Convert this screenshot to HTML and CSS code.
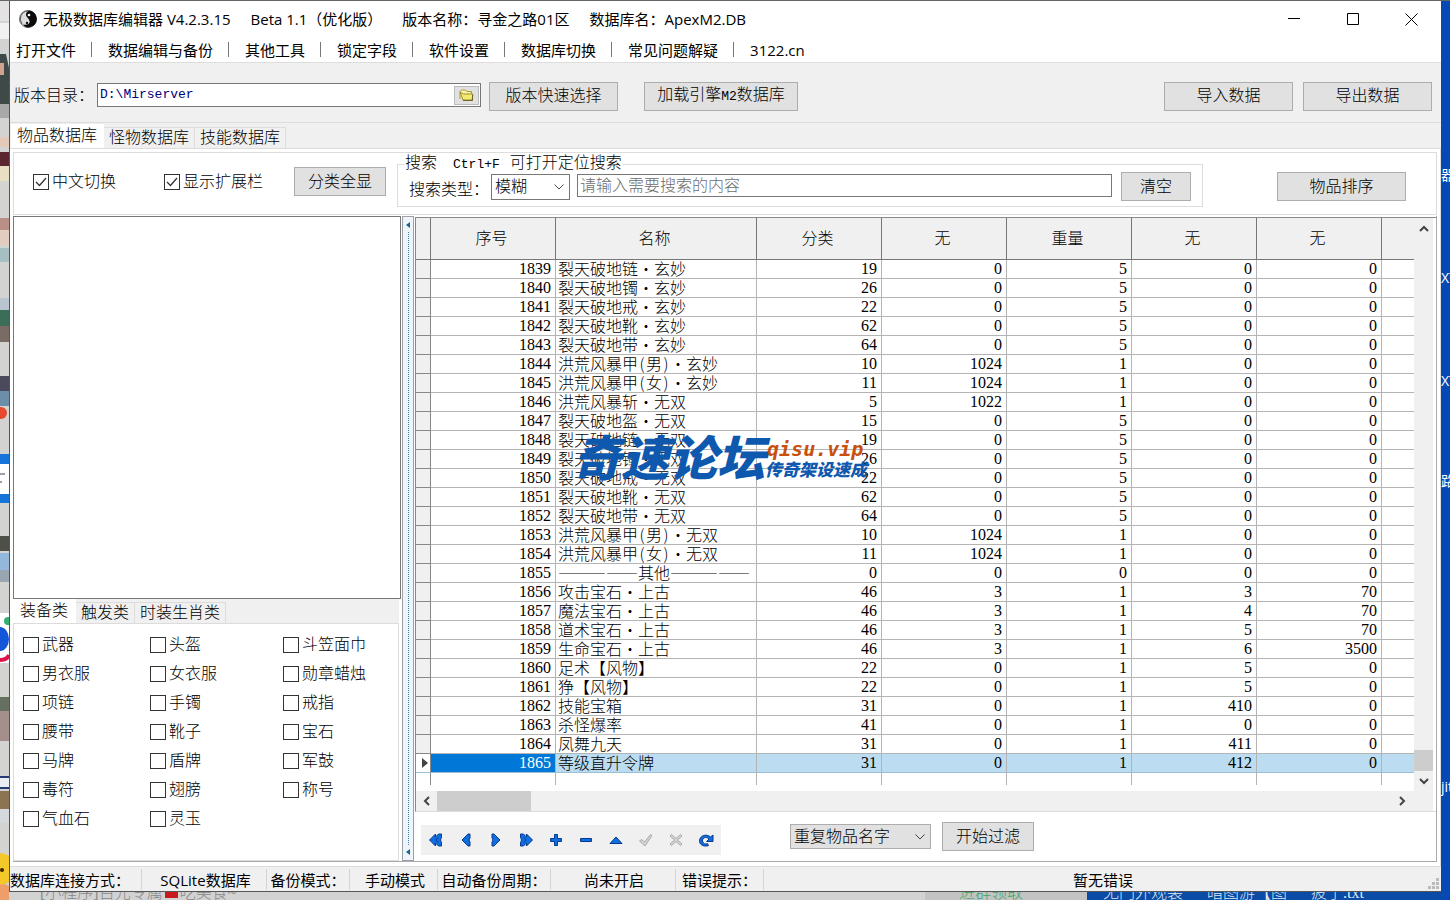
FILE: index.html
```html
<!DOCTYPE html>
<html lang="zh-CN">
<head>
<meta charset="utf-8">
<title>无极数据库编辑器</title>
<link rel="stylesheet" href="styles.css">
</head>
<body>
<div class="desk-top"></div>
<div class="desk-left">
<svg width="9" height="900" viewBox="0 0 9 900"><rect width="9" height="900" fill="#d3d3d1"/><rect width="9" height="20" fill="#e4e2e2"/><rect y="22" width="9" height="16" fill="#f1f1f1"/><path d="M0 53h6l3 14v36H0z" fill="#3d4a48"/><rect y="62" width="4" height="12" fill="#d1a28f"/><rect y="103" width="9" height="14" fill="#a8a8a8"/><rect y="136" width="9" height="10" fill="#e4c8b8"/><rect y="151" width="9" height="14" fill="#5b2630"/><rect y="165" width="9" height="15" fill="#e9dfc3"/><rect y="217" width="9" height="12" fill="#b98f86"/><rect y="229" width="9" height="15" fill="#e3cdbf"/><rect y="247" width="9" height="14" fill="#a5bfc2"/><rect y="297" width="9" height="12" fill="#b9c6d0"/><rect y="309" width="9" height="16" fill="#3c6d58"/><rect y="325" width="9" height="16" fill="#7a6c64"/><rect y="375" width="9" height="15" fill="#4b4a5c"/><rect y="390" width="9" height="15" fill="#6b8fa8"/><circle cx="1" cy="412" r="6" fill="#e64a2f"/><rect y="453" width="9" height="10" fill="#1774d8"/><rect y="463" width="9" height="30" fill="#fff"/><path d="M0 473h5M0 481h2" stroke="#345"/><rect y="493" width="9" height="9" fill="#1774d8"/><rect y="535" width="9" height="15" fill="#4d5049"/><rect y="552" width="9" height="17" fill="#92b8dc"/><rect y="569" width="9" height="12" fill="#98a6b2"/><rect y="612" width="9" height="50" fill="#fff"/><circle cx="8" cy="620" r="4" fill="#35b070"/><ellipse cx="0" cy="638" rx="9" ry="12" fill="#1456d8"/><path d="M0 659q7 0 9-5" stroke="#e0144c" stroke-width="4" fill="none"/><rect y="696" width="9" height="14" fill="#667060"/><rect y="710" width="9" height="30" fill="#a48f8c"/><rect y="775" width="9" height="13" fill="#e8edf6"/><path d="M0 776h9M0 787h9" stroke="#243a70" stroke-width="2"/><rect y="790" width="9" height="18" fill="#8c7452"/><rect y="808" width="9" height="13" fill="#d5d8dd"/><circle cx="0" cy="868" r="16" fill="#f2c928"/><circle cx="2" cy="869" r="2" fill="#3a2000"/><circle cx="3" cy="892" r="9" fill="#ef9d6b"/></svg>
</div>
<div class="app">
  <header class="titlebar">
    <svg class="logo" width="18" height="18" viewBox="0 0 18 18"><circle cx="9" cy="9" r="8.5" fill="#ddd" stroke="#777"/><path d="M10 .5a8.500 8.500 0 0 1 1 16.800Q6 18 4 14.500c5 1 8-1 6-5C7 6 5 4 10 .5z" fill="#0b0b0b"/><path d="M9 1A8 8 0 0 0 3 14" stroke="#555" stroke-width="1" fill="none"/><circle cx="10" cy="5" r="1.300" fill="#fff"/><circle cx="8" cy="13" r="1.200" fill="#111"/></svg>
    <h1 class="caption"><span>无极数据库编辑器 V4.2.3.15</span><span>Beta 1.1（优化版）</span><span>版本名称：寻金之路01区</span><span>数据库名：ApexM2.DB</span></h1>
    <div class="winbtns">
      <button aria-label="最小化"><svg width="12" height="12"><path d="M0 5.500h12" stroke="#000"/></svg></button>
      <button aria-label="最大化"><svg width="12" height="12"><path d="M.5.5h11v11H.5z" stroke="#000" fill="none"/></svg></button>
      <button aria-label="关闭"><svg width="13" height="13"><path d="M.5.5l12 12M12.500.5l-12 12" stroke="#000" fill="none"/></svg></button>
    </div>
  </header>
  <nav class="menu">
    <button>打开文件</button><i></i><button>数据编辑与备份</button><i></i><button>其他工具</button><i></i><button>锁定字段</button><i></i><button>软件设置</button><i></i><button>数据库切换</button><i></i><button>常见问题解疑</button><i></i><button>3122.cn</button>
  </nav>
  <div class="toolbar">
    <label for="dir">版本目录：</label>
    <div class="pathbox">
      <input id="dir" type="text" value="D:\Mirserver">
      <button class="browse" aria-label="浏览"><svg width="15" height="12" viewBox="0 0 15 12"><path d="M1 10V2.500L2.500 1h4L8 2.500h4.500V5" fill="#fbf3a4" stroke="#a89a3c"/><path d="M1 3l3.500 2H14l-1 6H4z" fill="#f4ea72" stroke="#9a8c34"/><path d="M4 11.500h9.500V6" stroke="#6d6424" fill="none"/></svg></button>
    </div>
    <button class="btn w129">版本快速选择</button>
    <button class="btn w154 load">加载引擎<span class="narrow">M2</span>数据库</button>
    <button class="btn w129 right">导入数据</button>
    <button class="btn w129">导出数据</button>
  </div>
  <div class="tabs main-tabs" role="tablist">
    <button class="tab active" role="tab">物品数据库</button><button class="tab" role="tab">怪物数据库</button><button class="tab" role="tab">技能数据库</button>
  </div>
  <main class="page">
    <section class="filter">
      <label class="check c1"><input type="checkbox" checked>中文切换</label>
      <label class="check c2"><input type="checkbox" checked>显示扩展栏</label>
      <button class="btn w92 showall">分类全显</button>
      <fieldset class="group">
        <legend>搜索<span class="mono">Ctrl+F</span>可打开定位搜索</legend>
        <label for="kind">搜索类型：</label>
        <select id="kind" class="combo kind"><option>模糊</option></select>
        <input class="query" type="text" placeholder="请输入需要搜索的内容" aria-label="搜索内容">
        <button class="btn w70 clear">清空</button>
      </fieldset>
      <button class="btn w129 sort">物品排序</button>
    </section>
    <div class="split">
      <aside class="side">
        <div class="list"></div>
        <div class="tabs side-tabs" role="tablist">
          <button class="tab active" role="tab">装备类</button><button class="tab" role="tab">触发类</button><button class="tab" role="tab">时装生肖类</button>
        </div>
        <div class="cats">
          <label class="check"><input type="checkbox">武器</label><label class="check"><input type="checkbox">头盔</label><label class="check"><input type="checkbox">斗笠面巾</label>
          <label class="check"><input type="checkbox">男衣服</label><label class="check"><input type="checkbox">女衣服</label><label class="check"><input type="checkbox">勋章蜡烛</label>
          <label class="check"><input type="checkbox">项链</label><label class="check"><input type="checkbox">手镯</label><label class="check"><input type="checkbox">戒指</label>
          <label class="check"><input type="checkbox">腰带</label><label class="check"><input type="checkbox">靴子</label><label class="check"><input type="checkbox">宝石</label>
          <label class="check"><input type="checkbox">马牌</label><label class="check"><input type="checkbox">盾牌</label><label class="check"><input type="checkbox">军鼓</label>
          <label class="check"><input type="checkbox">毒符</label><label class="check"><input type="checkbox">翅膀</label><label class="check"><input type="checkbox">称号</label>
          <label class="check"><input type="checkbox">气血石</label><label class="check"><input type="checkbox">灵玉</label>
        </div>
      </aside>
      <div class="splitter"><svg width="4" height="6"><path d="M4 0v6L0 3z" fill="#17658f"/></svg><span class="dots"></span><svg width="4" height="6"><path d="M4 0v6L0 3z" fill="#17658f"/></svg></div>
      <section class="data">
        <div class="gridbox">
          <div class="tablewrap">
            <table>
              <colgroup><col class="k0"><col class="k1"><col class="k2"><col class="k1"><col class="k1"><col class="k1"><col class="k1"><col class="k1"><col></colgroup>
              <thead><tr><th></th><th>序号</th><th>名称</th><th>分类</th><th>无</th><th>重量</th><th>无</th><th>无</th><th></th></tr></thead>
              <tbody>
                <tr><td></td><td>1839</td><td>裂天破地链<b>·</b>玄妙</td><td>19</td><td>0</td><td>5</td><td>0</td><td>0</td><td></td></tr>
                <tr><td></td><td>1840</td><td>裂天破地镯<b>·</b>玄妙</td><td>26</td><td>0</td><td>5</td><td>0</td><td>0</td><td></td></tr>
                <tr><td></td><td>1841</td><td>裂天破地戒<b>·</b>玄妙</td><td>22</td><td>0</td><td>5</td><td>0</td><td>0</td><td></td></tr>
                <tr><td></td><td>1842</td><td>裂天破地靴<b>·</b>玄妙</td><td>62</td><td>0</td><td>5</td><td>0</td><td>0</td><td></td></tr>
                <tr><td></td><td>1843</td><td>裂天破地带<b>·</b>玄妙</td><td>64</td><td>0</td><td>5</td><td>0</td><td>0</td><td></td></tr>
                <tr><td></td><td>1844</td><td>洪荒风暴甲<u>(</u>男<u>)</u><b>·</b>玄妙</td><td>10</td><td>1024</td><td>1</td><td>0</td><td>0</td><td></td></tr>
                <tr><td></td><td>1845</td><td>洪荒风暴甲<u>(</u>女<u>)</u><b>·</b>玄妙</td><td>11</td><td>1024</td><td>1</td><td>0</td><td>0</td><td></td></tr>
                <tr><td></td><td>1846</td><td>洪荒风暴斩<b>·</b>无双</td><td>5</td><td>1022</td><td>1</td><td>0</td><td>0</td><td></td></tr>
                <tr><td></td><td>1847</td><td>裂天破地盔<b>·</b>无双</td><td>15</td><td>0</td><td>5</td><td>0</td><td>0</td><td></td></tr>
                <tr><td></td><td>1848</td><td>裂天破地链<b>·</b>无双</td><td>19</td><td>0</td><td>5</td><td>0</td><td>0</td><td></td></tr>
                <tr><td></td><td>1849</td><td>裂天破地镯<b>·</b>无双</td><td>26</td><td>0</td><td>5</td><td>0</td><td>0</td><td></td></tr>
                <tr><td></td><td>1850</td><td>裂天破地戒<b>·</b>无双</td><td>22</td><td>0</td><td>5</td><td>0</td><td>0</td><td></td></tr>
                <tr><td></td><td>1851</td><td>裂天破地靴<b>·</b>无双</td><td>62</td><td>0</td><td>5</td><td>0</td><td>0</td><td></td></tr>
                <tr><td></td><td>1852</td><td>裂天破地带<b>·</b>无双</td><td>64</td><td>0</td><td>5</td><td>0</td><td>0</td><td></td></tr>
                <tr><td></td><td>1853</td><td>洪荒风暴甲<u>(</u>男<u>)</u><b>·</b>无双</td><td>10</td><td>1024</td><td>1</td><td>0</td><td>0</td><td></td></tr>
                <tr><td></td><td>1854</td><td>洪荒风暴甲<u>(</u>女<u>)</u><b>·</b>无双</td><td>11</td><td>1024</td><td>1</td><td>0</td><td>0</td><td></td></tr>
                <tr><td></td><td>1855</td><td>—————其他—————</td><td>0</td><td>0</td><td>0</td><td>0</td><td>0</td><td></td></tr>
                <tr><td></td><td>1856</td><td>攻击宝石<b>·</b>上古</td><td>46</td><td>3</td><td>1</td><td>3</td><td>70</td><td></td></tr>
                <tr><td></td><td>1857</td><td>魔法宝石<b>·</b>上古</td><td>46</td><td>3</td><td>1</td><td>4</td><td>70</td><td></td></tr>
                <tr><td></td><td>1858</td><td>道术宝石<b>·</b>上古</td><td>46</td><td>3</td><td>1</td><td>5</td><td>70</td><td></td></tr>
                <tr><td></td><td>1859</td><td>生命宝石<b>·</b>上古</td><td>46</td><td>3</td><td>1</td><td>6</td><td>3500</td><td></td></tr>
                <tr><td></td><td>1860</td><td>足术【风物】</td><td>22</td><td>0</td><td>1</td><td>5</td><td>0</td><td></td></tr>
                <tr><td></td><td>1861</td><td>狰【风物】</td><td>22</td><td>0</td><td>1</td><td>5</td><td>0</td><td></td></tr>
                <tr><td></td><td>1862</td><td>技能宝箱</td><td>31</td><td>0</td><td>1</td><td>410</td><td>0</td><td></td></tr>
                <tr><td></td><td>1863</td><td>杀怪爆率</td><td>41</td><td>0</td><td>1</td><td>0</td><td>0</td><td></td></tr>
                <tr><td></td><td>1864</td><td>凤舞九天</td><td>31</td><td>0</td><td>1</td><td>411</td><td>0</td><td></td></tr>
                <tr class="current"><td><svg width="6" height="10"><path d="M0 0l6 5-6 5z" fill="#444"/></svg></td><td>1865</td><td>等级直升令牌</td><td>31</td><td>0</td><td>1</td><td>412</td><td>0</td><td></td></tr>
                <tr class="rest"><td></td><td></td><td></td><td></td><td></td><td></td><td></td><td></td><td></td></tr>
              </tbody>
            </table>
            <div class="mark"><strong>奇速论坛</strong><div><em>qisu.vip</em><span>传奇架设速成</span></div></div>
          </div>
          <div class="vbar"><button aria-label="向上"><svg width="10" height="7"><path d="M1 6l4-4 4 4" /></svg></button><span class="vthumb"></span><button aria-label="向下"><svg width="10" height="7"><path d="M1 1l4 4 4-4" /></svg></button></div>
          <div class="hbar"><button aria-label="向左"><svg width="7" height="10"><path d="M6 1L2 5l4 4" /></svg></button><span class="hthumb"></span><button aria-label="向右"><svg width="7" height="10"><path d="M1 1l4 4-4 4" /></svg></button></div>
        </div>
        <div class="foot">
          <div class="navigator">
            <button aria-label="首条"><svg width="16" height="14" viewBox="0 0 16 14"><path d="M7.500 1L1.500 7l6 6v-3l3 3h3v-3l-1-3 1-3V1h-3l-3 3z"/><path class="cut" d="M10 4.500L8 7l2 2.500"/></svg></button>
            <button aria-label="上一条"><svg width="16" height="14" viewBox="0 0 16 14"><path d="M10 1L4 7l6 6h2V9l-1-2 1-2V1z"/></svg></button>
            <button aria-label="下一条"><svg width="16" height="14" viewBox="0 0 16 14"><path d="M6 1l6 6-6 6H4V9l1-2-1-2V1z"/></svg></button>
            <button aria-label="末条"><svg width="16" height="14" viewBox="0 0 16 14"><path d="M8.500 1l6 6-6 6v-3l-3 3h-3v-3l1-3-1-3V1h3l3 3z"/><path class="cut" d="M6 4.500L8 7l-2 2.500"/></svg></button>
            <button aria-label="新增"><svg width="16" height="14" viewBox="0 0 16 14"><path d="M6.500 1.500h3v4h4v3h-4v4h-3v-4h-4v-3h4z"/></svg></button>
            <button aria-label="删除"><svg width="16" height="14" viewBox="0 0 16 14"><path d="M2.500 5.500h11v3h-11z"/></svg></button>
            <button aria-label="编辑"><svg width="16" height="14" viewBox="0 0 16 14"><path d="M8 4l6 6.500H2z"/></svg></button>
            <button aria-label="提交" disabled><svg width="16" height="14" viewBox="0 0 16 14"><path d="M1.500 8l2-1.500 3 2.500 6-7.500 1.500 1L7 13z"/></svg></button>
            <button aria-label="取消" disabled><svg width="16" height="14" viewBox="0 0 16 14"><path d="M2 3l1.500-1.500L8 5.500l4.500-4L14 3 9.500 7l4.500 4-1.500 1.500L8 8.500l-4.500 4L2 11l4.500-4z"/></svg></button>
            <button aria-label="刷新"><svg width="16" height="14" viewBox="0 0 16 14"><path d="M15 2v6.500H8.500L11 6C8 3 4 5 4.500 8s3.500 3.500 5 2.500l1 2C7 14 2 12.500 1.500 8.500 1 3 8 0 12.500 4z"/></svg></button>
          </div>
          <select class="combo dup" aria-label="过滤方式"><option>重复物品名字</option></select>
          <button class="btn w92">开始过滤</button>
        </div>
      </section>
    </div>
  </main>
  <footer class="status">
    <span class="s1">数据库连接方式：</span><span class="s2">SQLite数据库</span><span class="s3">备份模式：</span><span class="s4">手动模式</span><span class="s5">自动备份周期：</span><span class="s6">尚未开启</span><span class="s7">错误提示：</span><span class="s8">暂无错误</span>
    <svg class="grip" width="12" height="12"><path d="M8 0h3v3H8zM8 4h3v3H8zM8 8h3v3H8zM4 4h3v3H4zM4 8h3v3H4zM0 8h3v3H0z" fill="#bbb"/></svg>
  </footer>
</div>
<div class="desk-right">
<svg width="9" height="900" viewBox="0 0 9 900"><path d="M0 28h2q2 0 2 4v16q0 4-4 4z" fill="#c4b76c"/><path d="M0 66h2v14H0z" fill="#122"/><path d="M0 130h3v12H0z" fill="#c29a45"/><path d="M0 142h3v12H0z" fill="#c8c77c"/><path d="M0 428h5l1 8v30H0z" fill="#8c8c86"/><path d="M0 750h3v18H0z" fill="#49504a"/></svg>
<span class="t1">器</span><span class="t2">XT</span><span class="t2">XT</span><span class="t3">路</span><span class="t4">jit</span>
</div>
<div class="desk-bottom"><span class="b1">[小程序]百元专属<i></i>吃美食~</span><span class="b2">进群领取</span><span class="b3"><span>无门外观装</span><span>暗图游【图</span><span>疲于.txt</span></span></div>
</body>
</html>
```
FILE: styles.css
```css
* { box-sizing: border-box; }
body {
  margin: 0;
  min-height: 100vh;
  display: grid;
  grid-template-columns: 9px minmax(0, 1fr) 9px;
  grid-template-rows: 1px 1fr 8px;
  background: #0a4fbe;
  font: 300 16px/18px "Liberation Serif", "Noto Sans CJK SC", sans-serif;
  color: #000;
}
button, input, select, fieldset, legend { font: inherit; color: inherit; margin: 0; padding: 0; border: 0; background: none; }
button { white-space: nowrap; }
svg { display: block; }

/* desktop around the window */
.desk-top { grid-column: 1 / 4; background: #666; }
.desk-left { grid-row: 2 / 4; overflow: hidden; height: 0; min-height: 100%; }
.desk-right { grid-row: 2 / 4; grid-column: 3; background: #0648b4; color: #fff; overflow: hidden; display: grid; font: 14px/18px "Open Sans", "Noto Sans CJK SC", sans-serif; }
.desk-right > * { grid-area: 1 / 1; }
.desk-right svg { height: 0; overflow: visible; }
.t1 { margin-top: 165px; }
.t2 { margin-top: 268px; }
.t2 + .t2 { margin-top: 371px; }
.t3 { margin-top: 471px; }
.t4 { margin-top: 777px; }
.desk-bottom { grid-row: 3; grid-column: 2; display: flex; align-items: flex-end; overflow: hidden; background: #d2d2d2; color: #888; height: 8px; line-height: 15px; white-space: nowrap; }
.b1 { padding-left: 31px; flex: 0 1 916px; }
.b1 i { display: inline-block; width: 13px; height: 12px; background: #c8191f; margin: 0 2px; }
.b2 { color: #3ba868; flex: 0 0 162px; padding-left: 34px; background: #c3c3c3; }
.b3 { flex: 1; background: #0a4ba6; color: #dfe8f2; display: flex; gap: 24px; padding-left: 16px; }

/* window frame */
.app { grid-row: 2; grid-column: 2; display: flex; flex-direction: column; background: #fff; border-left: 1px solid #555; border-bottom: 1px solid #555; min-width: 0; }
.titlebar { height: 36px; display: flex; align-items: center; padding-left: 9px; }
.caption { margin: 0 0 0 6px; font: 400 15px/20px "Open Sans", "Noto Sans CJK SC", sans-serif; display: flex; gap: 20px; flex: 1; white-space: nowrap; }
.winbtns { display: flex; }
.winbtns button { width: 59px; height: 36px; display: grid; place-items: center; }
.menu { height: 26px; display: flex; align-items: center; gap: 15px; padding-left: 6px; border-bottom: 1px solid #ddd; font: 400 15px/20px "Open Sans", "Noto Sans CJK SC", sans-serif; }
.menu i { width: 1px; height: 15px; background: #777; margin-right: 1px; }

/* shared controls */
.btn { height: 29px; background: #e1e1e1; border: 1px solid #adadad; flex: none; }
.w129 { width: 129px; }
.w154 { width: 154px; }
.w92 { width: 92px; }
.w70 { width: 70px; }
.narrow { font: 400 13px/18px "Liberation Mono", monospace; }
.check { display: flex; align-items: center; gap: 3px; white-space: nowrap; }
.check input { appearance: none; width: 16px; height: 16px; border: 1px solid #333; background: #fff; flex: none; }
.check input:checked { background: #fff url("data:image/svg+xml,%3Csvg xmlns='http://www.w3.org/2000/svg' width='14' height='14'%3E%3Cpath d='M2 7l3.500 3.500L12 3' fill='none' stroke='%23333' stroke-width='1.300'/%3E%3C/svg%3E"); }
.combo { appearance: none; border: 1px solid #777; background: #fff url("data:image/svg+xml,%3Csvg xmlns='http://www.w3.org/2000/svg' width='10' height='6'%3E%3Cpath d='M.5.5L5 5 9.500.5' fill='none' stroke='%23444'/%3E%3C/svg%3E") no-repeat right 5px center; padding: 0 3px; flex: none; }

.toolbar { height: 60px; background: #f0f0f0; border-bottom: 1px solid #dcdcdc; display: flex; align-items: center; padding: 7px 9px 0 4px; }
.toolbar label { width: 83px; white-space: nowrap; }
.pathbox { flex: 0 0 384px; height: 24px; border: 1px solid #777; background: #fff; display: flex; align-items: center; margin: 0 8px 2px 0; }
.pathbox input { flex: 1; min-width: 0; padding-left: 2px; color: #00007c; font: 400 13px/20px "Liberation Mono", monospace; }
.browse { width: 25px; height: 19px; background: #e1e1e1; border: 1px solid #bbb; display: grid; place-items: center; margin-right: 1px; }
.load { margin-left: 26px; }
.right { margin: 0 10px 0 auto; }

.tabs { display: flex; align-items: flex-end; background: #f0f0f0; }
.tab { border: 1px solid #dcdcdc; border-width: 1px 1px 0 0; height: 21px; line-height: 20px; padding: 0 5px; }
.tab.active { background: #fff; height: 24px; border-width: 0; padding: 0 7px 0 6px; }
.main-tabs { height: 26px; border-bottom: 1px solid #dcdcdc; padding-left: 1px; }
.page { flex: 1; padding: 3px 3px 4px 3px; display: flex; flex-direction: column; gap: 1px; min-width: 0; border-right: 1px solid #ddd; }

/* search strip */
.filter { height: 63px; border: 1px solid #dcdcdc; display: flex; align-items: flex-start; padding-right: 30px; }
.c1 { margin: 20px 0 0 19px; width: 131px; }
.c2 { margin-top: 20px; width: 130px; }
.showall { margin-top: 14px; }
.group { flex: 1; max-width: 806px; min-width: 0; height: 53px; margin: 1px 0 0 11px; border: 1px solid #dcdcdc; display: flex; padding: 0 11px; align-items: flex-start; }
.group legend { margin-left: -5px; padding: 0 1px; line-height: 18px; white-space: nowrap; }
.mono { font: 400 13px/18px "Liberation Mono", monospace; margin: 0 10px 0 16px; }
.group label { width: 82px; padding-top: 7px; white-space: nowrap; }
.kind { width: 79px; height: 26px; margin-right: 7px; }
.query { flex: 1; min-width: 0; height: 23px; border: 1px solid #777; padding: 0 2px; margin-right: 9px; }
.query::placeholder { color: #6d6d6d; opacity: 1; }
.clear { margin-top: -2px; }
.sort { margin: 19px 0 0 auto; }

/* left side */
.split { flex: 1; display: flex; min-width: 0; border-bottom: 1px solid #aaa; border-right: 1px solid #aaa; }
.side { flex: 0 0 388px; display: flex; flex-direction: column; }
.list { flex: 1; border: 1px solid #777; }
.side-tabs { height: 25px; margin-right: 2px; border-bottom: 1px solid #dcdcdc; }
.side-tabs .tab.active { padding: 0 8px 0 7px; }
.cats { margin-right: 2px; height: 237px; border: 1px solid #dcdcdc; border-top: 0; padding: 6px 0 0 9px; display: grid; grid-template-columns: 127px 133px auto; grid-auto-rows: 29px; align-content: start; }
.splitter { flex: 0 0 12px; margin: 0 1px; border: 1px solid #9aa0a4; background: #eef4f9; display: flex; flex-direction: column; align-items: center; padding: 5px 0; gap: 4px; }
.dots { flex: 1; border-left: 1px dotted #3c7fa8; }

/* data grid */
.data { flex: 1; min-width: 0; display: flex; flex-direction: column; }
.gridbox { flex: 1; display: grid; grid-template-columns: minmax(0, 1fr) 19px; grid-template-rows: 1fr 20px; border: 1px solid #888; border-right: 0; border-bottom-color: #dcdcdc; padding-right: 3px; margin-top: 1px; }
.tablewrap { position: relative; }
table { table-layout: fixed; width: 100%; border-collapse: separate; border-spacing: 0; }
.k0 { width: 15px; }
.k1 { width: 125px; }
.k2 { width: 201px; }
th { height: 42px; background: #f0f0f0; border: 1px solid #777; border-width: 0 1px 1px 0; font-weight: 300; padding: 0 3px 0 0; }
td { height: 19px; line-height: 18px; padding: 0 4px 0 2px; border: 1px solid #b4b4b4; border-width: 0 1px 1px 0; text-align: right; white-space: nowrap; }
td:first-child { background: #f0f0f0; border-color: #888; padding: 0 2px 0 6px; }
td:nth-child(3) { text-align: left; font-family: "Noto Sans CJK SC", sans-serif; line-height: 16px; vertical-align: top; font-variant-ligatures: none; }
th:last-child, td:last-child { border-right: 0; }
td b { display: inline-block; width: 16px; text-align: center; font-weight: 300; }
td u { display: inline-block; width: 8px; text-align: center; text-decoration: none; }
.current td { background: #bcdcf1; border-bottom-color: #9bbfd6; }
.current td:first-child { background: #fff; }
.current td:nth-child(2) { background: #0078d7; color: #fff; }
.rest td { height: 12px; border-bottom: 0; background: #fff; }
.rest td:first-child { background: #fff; }
.mark { position: absolute; left: 157px; top: 215px; display: flex; align-items: center; color: #0e58ae; font-style: italic; font-weight: 900; white-space: nowrap; }
.mark strong { font-size: 48px; line-height: 54px; font-weight: 900; }
.mark div { display: flex; flex-direction: column; }
.mark em { color: #c6500c; font: italic 700 20px/22px "DejaVu Sans Mono", monospace; padding-left: 2px; }
.mark span { font-size: 17px; line-height: 22px; }
.vbar { background: #f0f0f0; display: flex; flex-direction: column; }
.vbar button { height: 20px; display: grid; place-items: center; }
.vthumb { height: 21px; margin: auto 0 0; background: #cdcdcd; }
.hbar { grid-column: 1 / 3; background: #f0f0f0; display: flex; padding-right: 20px; }
.hbar button { width: 21px; display: grid; place-items: center; }
.hthumb { width: 94px; margin-right: auto; background: #cdcdcd; }
.vbar path, .hbar path { stroke: #444; stroke-width: 2; fill: none; }
.foot { height: 49px; display: flex; align-items: center; padding-left: 6px; }
.navigator { display: flex; background: #f0f0f0; margin: 6px 69px 0 0; }
.navigator button { width: 30px; height: 30px; display: grid; place-items: center; }
.navigator path { fill: #0f6fe0; stroke: #083a8c; }
.navigator .cut { fill: none; stroke: #083a8c; }
.navigator button:disabled path { fill: #d4d4d4; stroke: #aaa; }
.dup { width: 141px; height: 25px; margin-right: 11px; background-color: #e1e1e1; border-color: #adadad; }

/* status bar */
.status { height: 25px; flex: none; background: #f0f0f0; border-top: 1px solid #dcdcdc; display: flex; align-items: stretch; font: 400 15px/27px "Open Sans", "Noto Sans CJK SC", sans-serif; }
.status span { border-right: 1px solid #d4d4d4; white-space: nowrap; text-align: center; flex: none; margin: 2px 0 1px; line-height: 22px; }
.status .s1 { width: 132px; text-align: left; }
.s2 { width: 125px; padding-left: 3px; }
.s3 { width: 83px; }
.s4 { width: 88px; padding-left: 3px; }
.s5 { width: 113px; }
.s6 { width: 125px; padding-left: 2px; }
.s7 { width: 88px; }
.status .s8 { flex: 1; border: 0; padding-left: 14px; }
.grip { align-self: flex-end; margin: 0 1px 1px 0; }
```
